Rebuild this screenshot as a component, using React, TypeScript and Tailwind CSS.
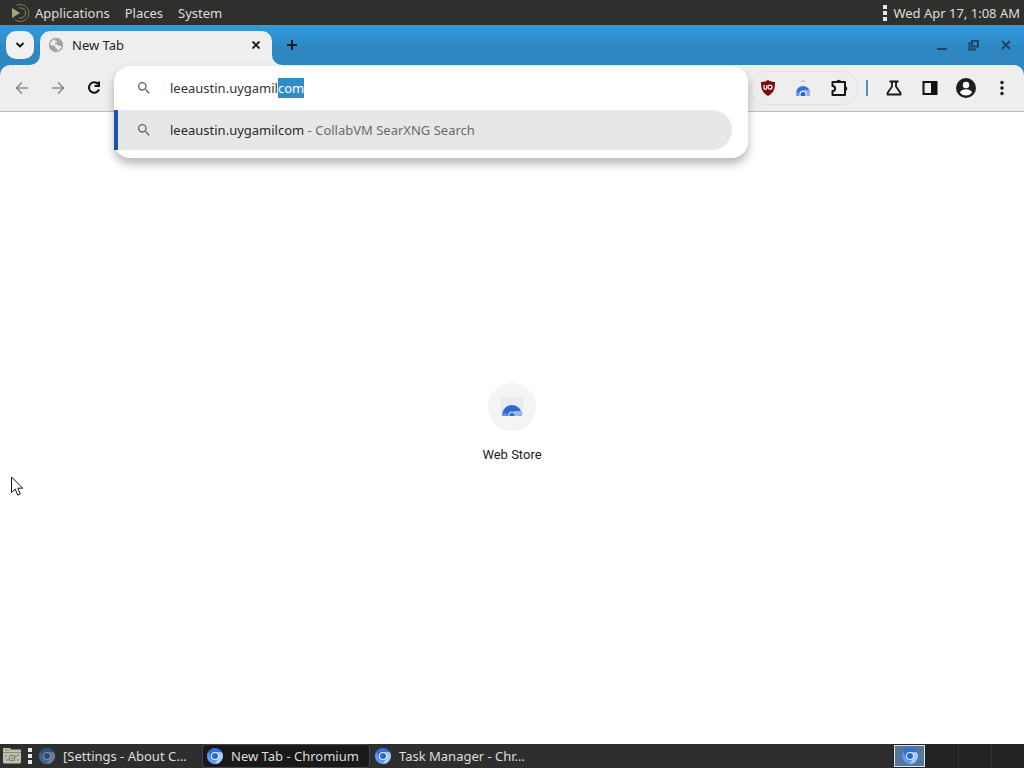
import { useEffect, useRef } from "react";
import type { ReactNode } from "react";

const iconButton = "flex h-9 w-9 items-center justify-center rounded-full";

const MateLogo = () => (
  <svg width="20" height="20" viewBox="0 0 20 20" fill="none" stroke="#8d9a58" strokeWidth="1">
    <path d="M1 5 9 10 1 15z" fill="#9ca878" stroke="none" />
    <path d="M5 2.500A8.600 8.600 0 1 1 4 16.800" opacity=".75" />
    <path d="M8 5A5.200 5.200 0 1 1 8 15" opacity=".9" />
  </svg>
);

const GlobeIcon = () => (
  <svg width="16" height="16" viewBox="0 0 16 16">
    <circle cx="8" cy="8" r="6.500" fill="#eee" stroke="#9da3a6" strokeWidth="1.400" />
    <path
      d="M1.500 8.500h4.500l1.500 1.500v1.500H9v3A6.500 6.500 0 0 1 1.500 8.500zM8 1.500h2.500A6.500 6.500 0 0 1 14.500 9H11L9.500 7.500H7V5.500h2V4H7z"
      fill="#9da3a6"
    />
  </svg>
);

const SearchIcon = () => (
  <svg width="16" height="16" viewBox="0 0 24 24" fill="#5f6368" aria-hidden="true">
    <path d="M15.500 14h-.79l-.28-.27A6.470 6.470 0 0 0 16 9.500 6.500 6.500 0 1 0 9.500 16c1.610 0 3.090-.59 4.230-1.570l.27.28v.79l5 4.990L20.490 19l-4.990-5zm-6 0a4.500 4.500 0 1 1 0-9 4.500 4.500 0 0 1 0 9z" />
  </svg>
);

const ArrowIcon = ({ flip }: { flip?: boolean }) => (
  <svg width="16" height="16" viewBox="0 0 16 16" fill="none" stroke="#8d8d8d" strokeWidth="1.700">
    <path d={flip ? "M2 8h11M8 2.500 13.500 8 8 13.500" : "M14 8H3M8 2.500 2.500 8 8 13.500"} />
  </svg>
);

const ReloadIcon = () => (
  <svg width="16" height="16" viewBox="0 0 16 16" fill="none" stroke="#111" strokeWidth="2">
    <path d="M12.200 4.200A5.200 5.200 0 1 0 13 9.500M13 1.500V6H8.500" />
  </svg>
);

const ShieldIcon = () => (
  <svg width="16" height="16" viewBox="0 0 16 16">
    <path d="M8 0c2 1.500 4.500 2 7 2 0 7-1 10.500-7 14C2 12.500 1 9 1 2c2.500 0 5-.5 7-2z" fill="#800610" />
    <path d="M4 5v3q0 1.300 1.300 1.300T6.700 8V5" fill="none" stroke="#fff" strokeWidth="1.200" />
    <circle cx="10" cy="7.200" r="2" fill="none" stroke="#fff" strokeWidth="1.200" />
  </svg>
);

const StoreIcon = () => (
  <svg width="16" height="16" viewBox="0 0 16 16">
    <path d="M6 1.500q2-1 4 0" fill="none" stroke="#b5b5b5" strokeWidth="1" />
    <path d="M1 16v-3a7 7 0 0 1 14 0v3z" fill="#3c70d6" />
    <path d="M9 10h5.500l.5 3v3H9z" fill="#8db1f5" />
    <path d="M1 12q3-1 4 4H1z" fill="#6c9cf0" />
    <path d="M4.500 16v-2a3.500 3.500 0 0 1 7 0v2z" fill="#dce8fb" />
    <path d="M5.700 16v-1.700a2.300 2.300 0 0 1 4.600 0V16z" fill="#2664cf" />
  </svg>
);

const StoreTileIcon = () => (
  <svg width="24" height="24" viewBox="0 0 24 24">
    <path d="M1 2h22v18H1z" fill="#e9ecef" />
    <path d="M2 21v-1a10 10 0 0 1 20 0v1z" fill="#3367d0" />
    <path d="M14 16h7q1 2 1 5h-8z" fill="#93b5f4" />
    <path d="M2 18q4-1 6 3H2z" fill="#6292e8" />
    <path d="M8 21v-.5a4 4 0 0 1 8 0v.5z" fill="#a9c5f5" />
    <path d="M9.500 21v-.5a2.500 2.500 0 0 1 5 0v.5z" fill="#3268cb" />
  </svg>
);

const PuzzleIcon = () => (
  <svg width="20" height="20" viewBox="0 0 20 20" fill="none" stroke="#161616" strokeWidth="2">
    <path d="M3.500 4h12.500v13H3.500v-4c3.500 0 3.500-5 0-5z" strokeLinejoin="round" />
    <path d="M7.500 4a2.300 2.300 0 0 1 4.600 0zM16 8.200a2.300 2.300 0 0 1 0 4.600z" fill="#161616" stroke="none" />
  </svg>
);

const FlaskIcon = () => (
  <svg width="18" height="18" viewBox="0 0 18 18" fill="none" stroke="#161616" strokeWidth="1.800">
    <path d="M4.500 2.500h9M7 2.500v5L2.500 14v1.500h13V14L11 7.500v-5" strokeLinejoin="round" />
  </svg>
);

const SidePanelIcon = () => (
  <svg width="16" height="16" viewBox="0 0 16 16">
    <path d="M1.500 2h13v12h-13z" fill="none" stroke="#111" strokeWidth="2" />
    <path d="M9 1h6v14H9z" fill="#111" />
  </svg>
);

const ProfileIcon = () => (
  <svg width="20" height="20" viewBox="0 0 20 20">
    <circle cx="10" cy="10" r="10" fill="#1c1e22" />
    <circle cx="10" cy="7" r="3.200" fill="#fff" />
    <path d="M3.800 14.500c1.200-2.200 3.700-3.200 6.200-3.200s5 1 6.200 3.200A7.800 7.800 0 0 1 10 17.500a7.800 7.800 0 0 1-6.200-3z" fill="#fff" />
  </svg>
);

const MenuIcon = () => (
  <svg width="16" height="16" viewBox="0 0 16 16" fill="#111">
    <circle cx="8" cy="2.500" r="1.700" />
    <circle cx="8" cy="8" r="1.700" />
    <circle cx="8" cy="13.500" r="1.700" />
  </svg>
);

const ChromiumIcon = () => (
  <svg width="16" height="16" viewBox="0 0 16 16">
    <circle cx="8" cy="8" r="8" fill="#2e72da" />
    <path d="M8 4.300h7A8 8 0 0 1 7.500 16L11 10z" fill="#a9c9fa" />
    <path d="M1.200 4A8 8 0 0 0 7.500 16L11 10.500 5 10z" fill="#5f98f0" />
    <circle cx="8" cy="8" r="4" fill="#e8f0fd" />
    <circle cx="8" cy="8" r="3" fill="#2a69d2" />
  </svg>
);

const FilesIcon = () => (
  <svg width="20" height="18" viewBox="0 0 20 18">
    <path d="M1 2q0-1 1-1h6l1 1.500h9q1 0 1 1V15q0 1.500-1.500 1.500h-15Q1 16.500 1 15z" fill="#bfc0ae" />
    <path d="M1 5.500h18M3 3h4" stroke="#8a8b7c" />
    <path d="M4 8v2m2 2v2m8-6v2m2 2v2M4 13h1m10-5h2" stroke="#77786b" />
    <circle cx="10" cy="11" r="3" fill="none" stroke="#77786b" />
    <path d="M9 11h3" stroke="#77786b" />
  </svg>
);

const Grip = () => (
  <svg width="4" height="16" viewBox="0 0 4 16" fill="#e6e6e6">
    <path d="M0 0h4v4H0zM0 6h4v4H0zM0 12h4v4H0z" />
  </svg>
);

const TopPanel = () => (
  <header className="flex h-[25px] items-center bg-[#2f302e] pr-1 pl-[11px] text-[#dfdfdb]">
    <MateLogo />
    <nav className="ml-1 flex gap-[15px]">
      <button type="button">Applications</button>
      <button type="button">Places</button>
      <button type="button">System</button>
    </nav>
    <div className="ml-auto flex items-center gap-[6px]">
      <Grip />
      <button type="button">Wed Apr 17, 1:08 AM</button>
    </div>
  </header>
);

const TabStrip = () => (
  <div className="flex h-10 items-start bg-linear-to-b from-[#3399dc] from-0% via-[#2f8dcc] via-45% to-[#2f87c1] to-55% pt-[6px] pl-[6px]">
    <button type="button" aria-label="Search tabs" className="flex h-7 w-7 items-center justify-center rounded-[10px] bg-[#f1f1f1]">
      <svg width="10" height="10" viewBox="0 0 10 10" fill="none" stroke="#111" strokeWidth="1.800">
        <path d="M1.500 3 5 6.500 8.500 3" />
      </svg>
    </button>
    <div className="relative ml-[6px] flex h-full w-[232px] items-start rounded-t-[10px] bg-[#eee] pr-2 pl-2">
      <svg className="absolute bottom-0 -left-[10px]" width="10" height="10" fill="#eee">
        <path d="M0 10A10 10 0 0 0 10 0V10z" />
      </svg>
      <svg className="absolute -right-[10px] bottom-0" width="10" height="10" fill="#eee">
        <path d="M10 10A10 10 0 0 1 0 0V10z" />
      </svg>
      <div className="flex h-7 flex-1 items-center gap-2 text-[#1f1f1f]">
        <GlobeIcon />
        <span>New Tab</span>
        <button type="button" aria-label="Close tab" className="ml-auto flex h-4 w-4 items-center justify-center">
          <svg width="8" height="8" viewBox="0 0 8 8" stroke="#111" strokeWidth="1.800">
            <path d="M.5.5l7 7M7.500.5l-7 7" />
          </svg>
        </button>
      </div>
    </div>
    <button type="button" aria-label="New tab" className="ml-[6px] flex h-7 w-7 items-center justify-center">
      <svg width="10" height="10" viewBox="0 0 10 10" stroke="#111d29" strokeWidth="2">
        <path d="M5 0v10M0 5h10" />
      </svg>
    </button>
    <div className="mr-[2px] ml-auto flex h-7">
      <button type="button" aria-label="Minimize" className="flex w-8 items-center justify-center">
        <svg width="10" height="10" fill="#1d4665">
          <path d="M0 8h10v2H0z" />
        </svg>
      </button>
      <button type="button" aria-label="Restore" className="flex w-8 items-center justify-center">
        <svg width="12" height="12" fill="none" stroke="#1d4665" strokeWidth="2">
          <path d="M4 2h6v5.500H4zM1.500 3v7.500H8" />
        </svg>
      </button>
      <button type="button" aria-label="Close" className="flex w-8 items-center justify-center">
        <svg width="10" height="10" stroke="#1d4665" strokeWidth="2">
          <path d="M1 1l8 8M9 1 1 9" />
        </svg>
      </button>
    </div>
  </div>
);

const Omnibox = () => {
  const input = useRef<HTMLInputElement>(null);

  useEffect(() => {
    input.current?.focus();
    input.current?.setSelectionRange(17, 20);
  }, []);

  return (
    <div className="absolute inset-x-0 top-0 z-10 rounded-2xl bg-white pb-2 shadow-[0_6px_10px_rgba(0,0,0,0.28)]">
      <label className="flex h-11 items-center gap-[18px] pl-[22px]">
        <SearchIcon />
        <input
          ref={input}
          aria-label="Address and search bar"
          defaultValue="leeaustin.uygamilcom"
          className="min-w-0 flex-1 bg-transparent text-[#333] outline-none selection:bg-[#308cc6] selection:text-white"
        />
      </label>
      <a href="#search" className="mr-4 flex h-10 items-center gap-[18px] rounded-r-full border-l-4 border-[#1a56a8] bg-[#e7e7e7] pl-[18px]">
        <SearchIcon />
        <span className="truncate text-[#6a6a6a]">
          <span className="text-[#2a2a2a]">leeaustin.uygamilcom</span> - CollabVM SearXNG Search
        </span>
      </a>
    </div>
  );
};

const Toolbar = () => (
  <div className="bg-[#2f87c1]">
    <div className="flex h-[47px] items-start rounded-t-[10px] border-b border-[#bcbcbc] bg-[#eee] px-1 pt-px">
      <div className="flex pt-1">
        <button type="button" aria-label="Back" className={iconButton}><ArrowIcon /></button>
        <button type="button" aria-label="Forward" className={iconButton}><ArrowIcon flip /></button>
        <button type="button" aria-label="Reload" className={iconButton}><ReloadIcon /></button>
      </div>
      <div className="relative mx-[2px] min-w-0 flex-1 self-stretch">
        <Omnibox />
      </div>
      <div className="flex items-center pt-1">
        <div className="flex h-[34px] items-center rounded-full border border-[#e2e2e2]">
          <button type="button" aria-label="uBlock Origin" className="flex h-8 w-[34px] items-center justify-center"><ShieldIcon /></button>
          <button type="button" aria-label="Web Store" className="flex h-8 w-9 items-center justify-center"><StoreIcon /></button>
          <button type="button" aria-label="Extensions" className="flex h-8 w-9 items-center justify-center"><PuzzleIcon /></button>
        </div>
        <div className="mx-2 h-4 w-[2px] bg-[#4a94c8]" />
        <button type="button" aria-label="Experiments" className={iconButton}><FlaskIcon /></button>
        <button type="button" aria-label="Side panel" className={iconButton}><SidePanelIcon /></button>
        <button type="button" aria-label="Profile" className={iconButton}><ProfileIcon /></button>
        <button type="button" aria-label="Menu" className={iconButton}><MenuIcon /></button>
      </div>
    </div>
  </div>
);

const NewTabPage = () => (
  <main className="flex flex-1 flex-col items-center justify-center bg-white pb-2">
    <a href="#store" className="flex flex-col items-center gap-[14px] font-[Roboto,sans-serif] text-[13px] leading-5 text-[#202124]">
      <span className="flex h-12 w-12 items-center justify-center rounded-full bg-[#f3f4f5]">
        <StoreTileIcon />
      </span>
      <span>Web Store</span>
    </a>
  </main>
);

interface TaskButtonProps {
  children: ReactNode;
  active?: boolean;
  minimized?: boolean;
}

const TaskButton = ({ children, active, minimized }: TaskButtonProps) => (
  <button
    type="button"
    className={`flex h-6 w-[168px] items-center gap-2 rounded-[4px] border px-1 text-left whitespace-nowrap ${
      active ? "border-[#454545] bg-[#191919]" : "border-transparent"
    }`}
  >
    <span className={minimized ? "opacity-50" : ""}>
      <ChromiumIcon />
    </span>
    {children}
  </button>
);

const BottomPanel = () => (
  <footer className="flex h-6 items-center bg-[#2e2e2e] pl-[2px] text-[#dfdfdb]">
    <button type="button" aria-label="Show desktop">
      <FilesIcon />
    </button>
    <div className="mr-[2px] ml-[6px]">
      <Grip />
    </div>
    <div className="flex">
      <TaskButton minimized>[Settings - About C…</TaskButton>
      <TaskButton active>New Tab - Chromium</TaskButton>
      <TaskButton>Task Manager - Chr…</TaskButton>
    </div>
    <div className="ml-auto flex h-full bg-[#222]">
      <button type="button" aria-label="Workspace 1" className="m-px flex w-[31px] items-center justify-center border border-[#dce6ee] bg-[#57779a]">
        <ChromiumIcon />
      </button>
      <button type="button" aria-label="Workspace 2" className="w-[33px] border-r border-[#303030]" />
      <button type="button" aria-label="Workspace 3" className="w-[33px] border-r border-[#303030]" />
      <button type="button" aria-label="Workspace 4" className="w-8" />
    </div>
  </footer>
);

const App = () => {
  return (
    <div className="relative flex min-h-screen flex-col font-['Noto_Sans',sans-serif] text-[13px] leading-5">
      <TopPanel />
      <TabStrip />
      <Toolbar />
      <NewTabPage />
      <BottomPanel />
      <svg className="pointer-events-none absolute top-[476px] left-[11px]" width="13" height="21" viewBox="0 0 13 21">
        <path d="M.5 1v15.500l3.700-3.400 2.500 6 2.600-1.100-2.500-5.800h4.900z" fill="#fff" stroke="#111" />
      </svg>
    </div>
  );
};

export default App;
